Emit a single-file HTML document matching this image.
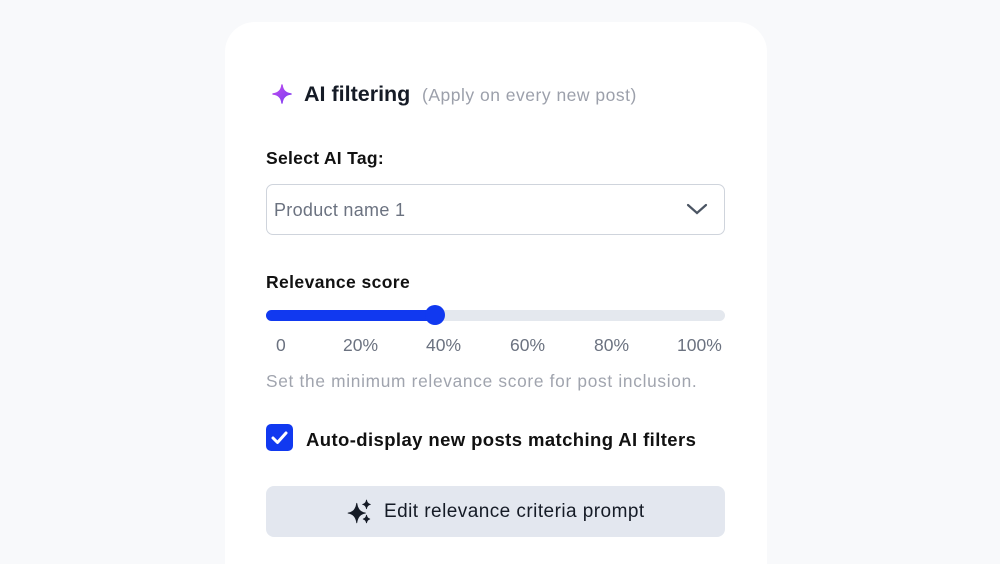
<!DOCTYPE html>
<html style="height:564px;overflow:hidden"><head><style>
body{margin:0;width:1000px;height:564px;background:#f8f9fb;font-family:"Liberation Sans",sans-serif;overflow:hidden;position:relative}
.card{position:absolute;left:225px;top:22px;width:542px;height:542px;background:#fff;border-radius:30px 30px 0 0}
.a{position:absolute;white-space:nowrap}
</style></head><body>
<div class="card"></div>
<svg class="a" style="left:272px;top:84px" width="20" height="20" viewBox="0 0 20 20"><defs><linearGradient id="g" x1="0" y1="0" x2="1" y2="1"><stop offset="0" stop-color="#c04cf0"/><stop offset="1" stop-color="#7a3cf0"/></linearGradient></defs><path d="M10 1 Q10.8 9.2 19 10 Q10.8 10.8 10 19 Q9.2 10.8 1 10 Q9.2 9.2 10 1Z" fill="url(#g)" stroke="url(#g)" stroke-width="1.5" stroke-linejoin="round"/></svg>
<div class="a" style="left:304px;top:82px;font-size:21.5px;font-weight:bold;color:#151b26">AI filtering</div>
<div class="a" style="left:422px;top:85px;font-size:17.5px;color:#9ca0ab;letter-spacing:0.5px">(Apply on every new post)</div>
<div class="a" style="left:266px;top:148px;font-size:17.5px;font-weight:bold;color:#111;letter-spacing:0.3px">Select AI Tag:</div>
<div class="a" style="left:266px;top:184px;width:457px;height:49px;border:1px solid #cfd4dc;border-radius:7px"></div>
<div class="a" style="left:274px;top:200px;font-size:18px;color:#6b7280;letter-spacing:0.3px">Product name 1</div>
<svg class="a" style="left:686px;top:202px" width="22" height="14" viewBox="0 0 22 14"><path d="M2 3l9 8 9-8" stroke="#4b5563" stroke-width="2.2" fill="none" stroke-linecap="round"/></svg>
<div class="a" style="left:266px;top:272px;font-size:17.5px;font-weight:bold;color:#111;letter-spacing:0.4px">Relevance score</div>
<div class="a" style="left:266px;top:310px;width:459px;height:11px;background:#e4e8ee;border-radius:6px"></div>
<div class="a" style="left:266px;top:310px;width:170px;height:11px;background:#1139f0;border-radius:6px"></div>
<div class="a" style="left:425px;top:305px;width:20px;height:20px;background:#1139f0;border-radius:50%"></div>
<div class="a" style="left:276px;top:335px;font-size:17.5px;color:#6b7280">0</div>
<div class="a" style="left:343px;top:335px;font-size:17.5px;color:#6b7280">20%</div>
<div class="a" style="left:426px;top:335px;font-size:17.5px;color:#6b7280">40%</div>
<div class="a" style="left:510px;top:335px;font-size:17.5px;color:#6b7280">60%</div>
<div class="a" style="left:594px;top:335px;font-size:17.5px;color:#6b7280">80%</div>
<div class="a" style="left:677px;top:335px;font-size:17.5px;color:#6b7280">100%</div>
<div class="a" style="left:266px;top:371px;font-size:17.3px;color:#a0a4ae;letter-spacing:0.7px">Set the minimum relevance score for post inclusion.</div>
<div class="a" style="left:266px;top:424px;width:27px;height:27px;background:#1139f0;border-radius:5px"></div>
<svg class="a" style="left:266px;top:424px" width="27" height="27" viewBox="0 0 27 27"><path d="M7 14l4.5 4.5L20 9" stroke="#fff" stroke-width="3" fill="none" stroke-linecap="round" stroke-linejoin="round"/></svg>
<div class="a" style="left:306px;top:429px;font-size:18.5px;font-weight:bold;color:#111;letter-spacing:0.4px">Auto-display new posts matching AI filters</div>
<div class="a" style="left:266px;top:486px;width:459px;height:51px;background:#e3e7ef;border-radius:8px"></div>
<svg class="a" style="left:347px;top:499px" width="26" height="26" viewBox="0 0 24 24" fill="#151b26" stroke="#151b26" stroke-width="0.8" stroke-linejoin="round"><path d="M9 4Q10 12 17 13Q10 14 9 22Q8 14 1 13Q8 12 9 4Z"/><path d="M18 1Q18.5 4.5 21.5 5Q18.5 5.5 18 9Q17.5 5.5 14.5 5Q17.5 4.5 18 1Z"/><path d="M18 15Q18.5 18 21 18.5Q18.5 19 18 22Q17.5 19 15 18.5Q17.5 18 18 15Z"/></svg>
<div class="a" style="left:384px;top:501px;font-size:19px;color:#151b26;letter-spacing:0.45px">Edit relevance criteria prompt</div>
</body></html>
